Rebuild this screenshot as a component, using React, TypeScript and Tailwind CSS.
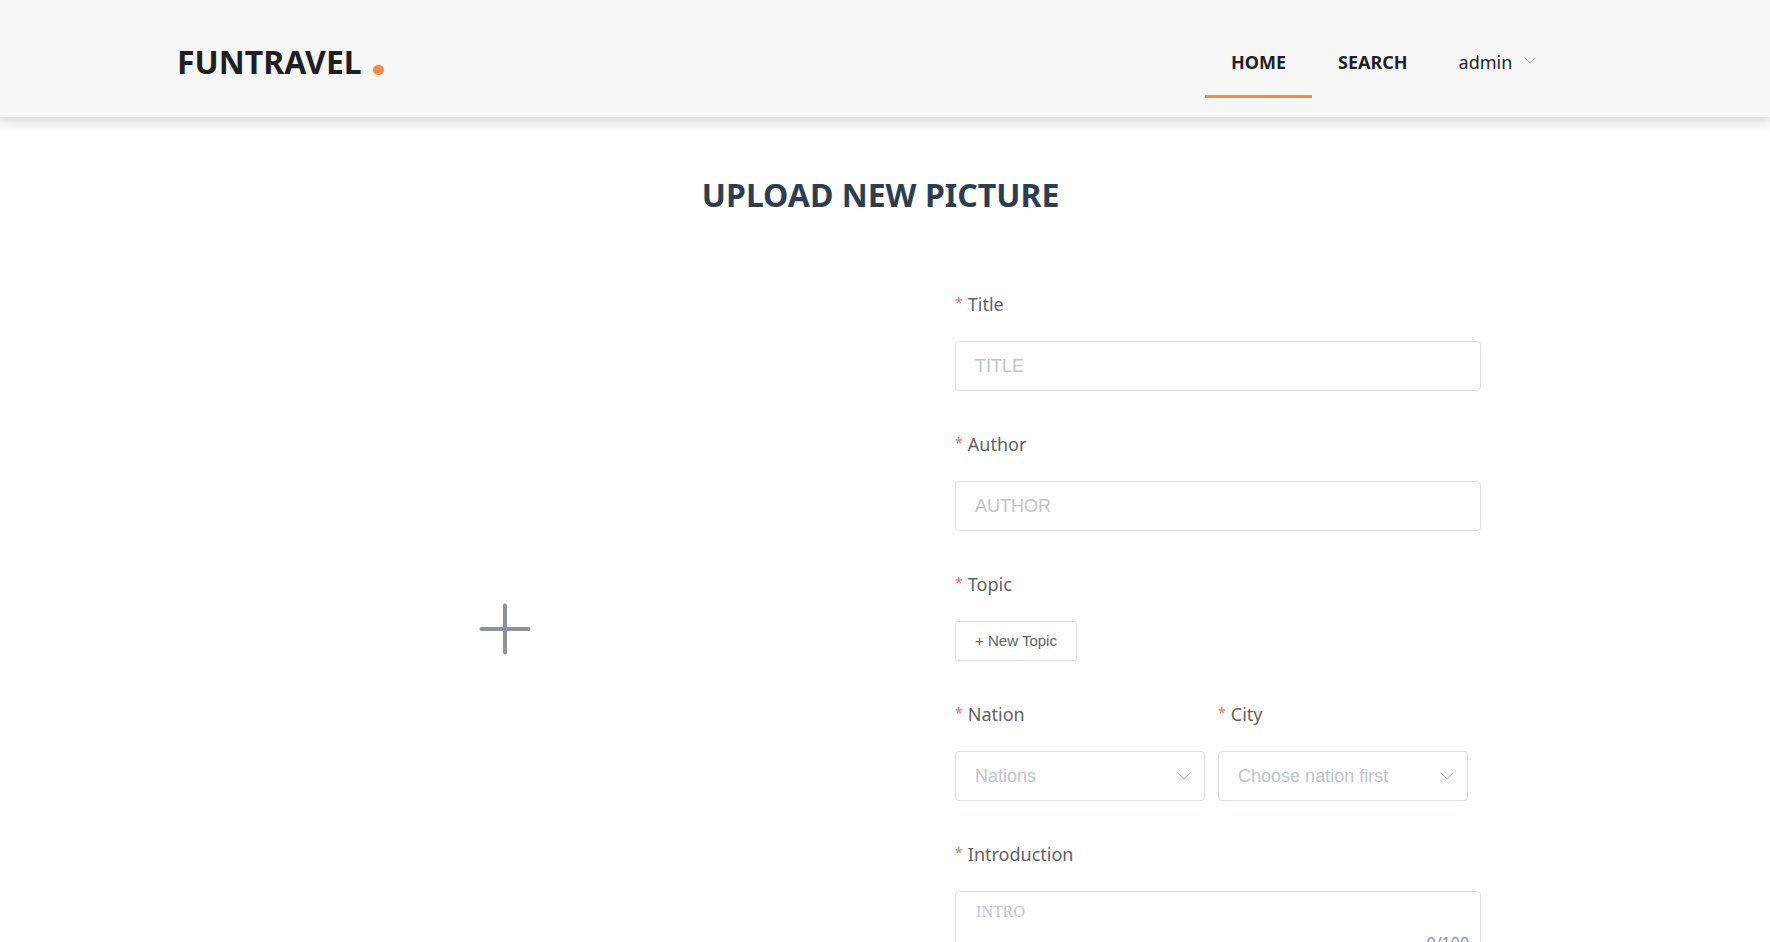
import { useState } from 'react';
import type { ReactNode } from 'react';

const controlClass =
  'h-[50px] w-full rounded border border-[#dcdfe6] bg-white px-[19px] font-["Liberation_Sans",Arial,sans-serif] text-lg outline-none placeholder:text-[#c0c4cc] focus:border-[#f78b42]';

function Chevron({ className }: { className: string }) {
  return (
    <svg viewBox="0 0 14 8" fill="none" stroke="currentColor" strokeLinecap="round" strokeLinejoin="round" className={className} aria-hidden="true">
      <path d="M1 1l6 6 6-6" />
    </svg>
  );
}

function Field({ id, label, children }: { id: string; label: string; children: ReactNode }) {
  return (
    <div className="flex flex-col items-start gap-3">
      <label htmlFor={id} className="flex gap-[5px] text-lg leading-[50px] text-[#606266]">
        <span className="text-sm leading-[48px] text-[#f56c6c]">*</span>
        {label}
      </label>
      {children}
    </div>
  );
}

function Select({ id, placeholder, options }: { id: string; placeholder: string; options: string[] }) {
  return (
    <div className="relative w-full">
      <select id={id} defaultValue="" className={`${controlClass} appearance-none text-[#c0c4cc]`}>
        <option value="" disabled>{placeholder}</option>
        {options.map((option) => (
          <option key={option}>{option}</option>
        ))}
      </select>
      <Chevron className="pointer-events-none absolute top-[21px] right-[14px] h-2 w-[14px] text-[#c0c4cc]" />
    </div>
  );
}

export default function App() {
  const [intro, setIntro] = useState('');

  return (
    <div className='min-h-screen bg-white font-["Noto_Sans","Open_Sans",sans-serif]'>
      <header className="flex h-[117px] items-stretch justify-between bg-[#f7f7f7] pt-[26px] pr-[13.2%] pb-[19px] pl-[10%] text-[#1f1f1f] shadow-[0_2px_12px_2px_rgba(0,0,0,0.18)]">
        <a href="#" className="flex items-center gap-[11px] self-center text-[32px] leading-10 font-bold">
          FUNTRAVEL
          <span className="mt-4 h-[10px] w-[11px] rounded-full bg-[#f78b42]" />
        </a>
        <nav className="flex text-lg leading-[72px]">
          <a href="#home" className="border-b-3 border-[#f78b42] px-[26px] font-bold">HOME</a>
          <a href="#search" className="px-[26px] font-bold">SEARCH</a>
          <button type="button" className="flex items-start gap-3 pl-[25px]">
            admin
            <Chevron className="mt-[31px] h-[7px] w-3 text-[#909399]" />
          </button>
        </nav>
      </header>

      <main className="pr-[10.5%] pl-[10%]">
        <h1 className="pt-14 text-center text-[32px] leading-[44px] font-bold text-[#2c3e50]">UPLOAD NEW PICTURE</h1>

        <form className="mt-[62px] grid grid-cols-[655fr_629fr] gap-x-[123px]">
          <button type="button" aria-label="Choose a picture" className="flex h-[700px] items-center justify-center">
            <svg viewBox="0 0 52 52" className="size-[52px]" stroke="#8c939d" strokeWidth="4" strokeLinecap="round" aria-hidden="true">
              <path d="M26 2.5v47M2.5 26h47" />
            </svg>
          </button>

          <div className="flex max-w-[526px] flex-col gap-7">
            <Field id="title" label="Title">
              <input id="title" placeholder="TITLE" className={controlClass} />
            </Field>
            <Field id="author" label="Author">
              <input id="author" placeholder="AUTHOR" className={controlClass} />
            </Field>
            <Field id="topic" label="Topic">
              <button id="topic" type="button" className='h-10 rounded-[3px] border border-[#dcdfe6] px-[19px] font-["Liberation_Sans",Arial,sans-serif] text-[15px] text-[#606266]'>
                + New Topic
              </button>
            </Field>
            <div className="grid grid-cols-2 gap-[13px] pr-[13px]">
              <Field id="nation" label="Nation">
                <Select id="nation" placeholder="Nations" options={['China', 'Italy', 'Canada']} />
              </Field>
              <Field id="city" label="City">
                <Select id="city" placeholder="Choose nation first" options={[]} />
              </Field>
            </div>
            <Field id="intro" label="Introduction">
              <div className="relative w-full">
                <textarea
                  id="intro"
                  placeholder="INTRO"
                  maxLength={100}
                  value={intro}
                  onChange={(event) => setIntro(event.target.value)}
                  className='block h-[68px] w-full resize-none rounded border border-[#dcdfe6] px-5 py-2 font-["Liberation_Serif",serif] text-base leading-6 outline-none placeholder:text-[#c0c4cc]'
                />
                <span className="absolute right-3 bottom-[6px] text-base leading-5 text-[#909399]">{intro.length}/100</span>
              </div>
            </Field>
          </div>
        </form>
      </main>
    </div>
  );
}
